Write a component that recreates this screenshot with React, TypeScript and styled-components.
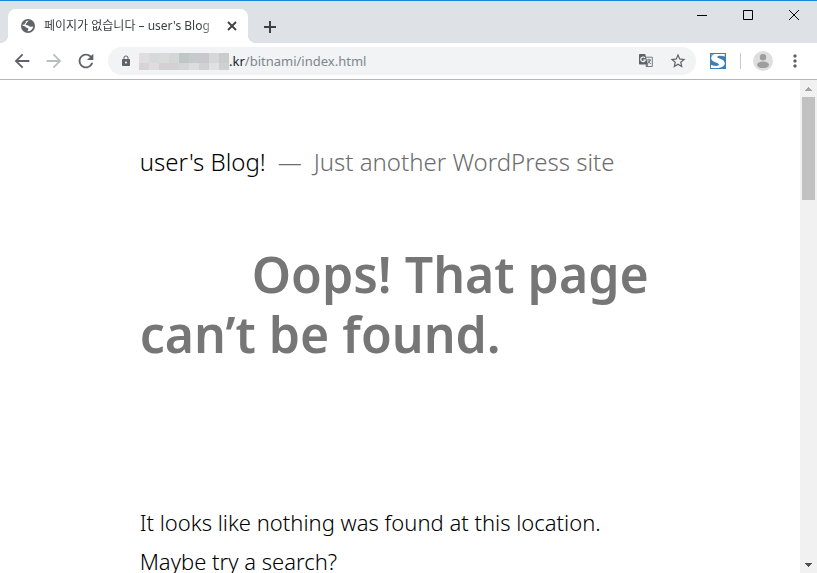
import React, { useState } from "react";
import styled, { createGlobalStyle } from "styled-components";
import { MdArrowBack, MdArrowForward, MdRefresh, MdLock, MdStarBorder, MdMoreVert } from "react-icons/md";

const ui = `"Noto Sans", "Noto Sans CJK KR", sans-serif`;

const GlobalStyle = createGlobalStyle`
  * { box-sizing: border-box; }
  body { margin: 0; background: #fff; }
  button { border: 0; padding: 0; background: none; color: inherit; font: inherit; display: flex; align-items: center; justify-content: center; }
  svg { display: block; flex: none; }
`;

const Window = styled.div`
  display: flex;
  flex-direction: column;
  height: 100vh;
  overflow: hidden;
  font-family: ${ui};
`;

const TabStrip = styled.header`
  display: flex;
  align-items: flex-end;
  flex: none;
  height: 43px;
  padding-left: 8px;
  border-top: 1px solid #1883d7;
  background: #dee1e6;
`;

const Tab = styled.div`
  position: relative;
  display: flex;
  align-items: center;
  width: 240px;
  height: 34px;
  padding: 0 8px 0 12px;
  border-radius: 8px 8px 0 0;
  background: #fff;
  color: #5f6368;

  &::before, &::after {
    content: "";
    position: absolute;
    bottom: 0;
    width: 8px;
    height: 8px;
  }
  &::before { left: -8px; background: radial-gradient(circle at 0 0, transparent 8px, #fff 8px); }
  &::after { right: -8px; background: radial-gradient(circle at 100% 0, transparent 8px, #fff 8px); }
`;

const TabTitle = styled.button`
  && {
    flex: 1;
    min-width: 0;
    margin-left: 8px;
    justify-content: flex-start;
    overflow: hidden;
    white-space: nowrap;
    font-size: 12px;
    line-height: 18px;
    color: #3c4043;
    mask-image: linear-gradient(to right, #000 156px, transparent 178px);
  }
`;

const IconButton = styled.button<{ $size?: number; $color?: string }>`
  && {
    flex: none;
    width: ${(p) => p.$size ?? 32}px;
    height: ${(p) => p.$size ?? 32}px;
    color: ${(p) => p.$color ?? "#5f6368"};
  }
`;

const NewTab = styled(IconButton)`
  && { margin-left: 6px; }
`;

const WindowControls = styled.div`
  display: flex;
  align-self: flex-start;
  margin-left: auto;
`;

const ControlButton = styled.button`
  && {
    width: 46px;
    height: 28px;
    color: #000;
  }
`;

const Toolbar = styled.nav`
  display: flex;
  align-items: center;
  flex: none;
  height: 37px;
  padding: 0 6px;
  border-bottom: 1px solid #b6b6b6;
  background: #fff;
`;

const AddressBar = styled.form`
  display: flex;
  align-items: center;
  flex: 1;
  min-width: 0;
  height: 28px;
  margin: 0 6px;
  padding: 0 2px 0 12px;
  border-radius: 14px;
  background: #f1f3f4;
  color: #5f6368;
  font-size: 13px;
  line-height: 20px;
`;

const Mosaic = styled.div`
  display: grid;
  grid-template-columns: repeat(9, 10px);
  grid-template-rows: 10px 7px;
  margin-left: 7px;
`;

const Tile = styled.span<{ $color: string }>`
  background: ${(p) => p.$color};
`;

const Domain = styled.label`
  color: #202124;
`;

const PathInput = styled.input`
  flex: 1;
  min-width: 0;
  padding: 0;
  border: 0;
  outline: 0;
  background: none;
  color: #80868b;
  font: inherit;
`;

const Divider = styled.span`
  width: 1px;
  height: 16px;
  margin: 0 6px;
  background: #c6c8cb;
`;

const Body = styled.div`
  display: flex;
  flex: 1;
  min-height: 0;
`;

const Page = styled.main`
  flex: 1;
  min-width: 0;
  overflow: hidden;
  padding: 64px calc(10% + 58px) 0;
  color: #000;
`;

const SiteBranding = styled.div`
  display: flex;
  flex-wrap: wrap;
  font-size: 24px;
  line-height: 36px;
  font-weight: 350;
  color: #6c6c6c;
`;

const SiteTitle = styled.a`
  color: #000;
  text-decoration: none;
`;

const Dash = styled.span`
  margin: 0 12px;
`;

const PageTitle = styled.h1`
  margin: 64px 0 0;
  font-size: 50px;
  line-height: 60px;
  font-weight: 600;
  text-indent: 112px;
  color: #767676;
`;

const Message = styled.p`
  margin: 139px 0 0;
  font-size: 22px;
  line-height: 39px;
  font-weight: 350;
`;

const Scrollbar = styled.div`
  display: flex;
  flex-direction: column;
  flex: none;
  width: 17px;
  background: #f1f1f1;
`;

const Track = styled.div`
  flex: 1;
  padding: 0 2px;
`;

const Thumb = styled.div`
  height: 22.5%;
  background: #c1c1c1;
`;

const tiles = [
  "#e0dcdf", "#d7dadb", "#d9dbdb", "#d5d7d7", "#bfc6c5", "#c7caca", "#c9c8cc", "#d4d8d6", "#c9cbcd",
  "#d7d3d6", "#dcdddf", "#d2d1d4", "#d2d1d4", "#d5d5d7", "#dadfdd", "#d2d2d4", "#dfe2e1", "#cdd1d3",
];

const Globe = () => (
  <svg width="16" height="16" viewBox="0 0 16 16">
    <circle cx="8" cy="8" r="7" fill="#5f6368" />
    <path d="M9.4 2.8C8 3 7.3 3.8 7 4.6 6.8 5.8 5.4 5.4 5.6 6.6 5.8 7.6 8.2 7 9 8 9.6 9 10.6 8.8 13.2 8.4 12.8 11.6 10.4 13.4 7.6 13.3 7.4 12.4 8.8 11.8 8.2 10.6 7.6 9.6 6.2 10 5.6 9 5 8.2 4 8 2.6 7.8 2.8 5 5.6 2.3 9.4 2.8Z" fill="#fff" />
    <path d="M3.4 4.4 5.2 3.2 6.2 4.3 4.8 5.4 4.2 6.8 2.8 6.6Z" fill="#5f6368" />
  </svg>
);

const CloseMark = () => (
  <svg width="14" height="14" viewBox="0 0 14 14">
    <path d="M3 3 11 11M11 3 3 11" stroke="currentColor" strokeWidth="1.8" />
  </svg>
);

const Plus = () => (
  <svg width="14" height="14" viewBox="0 0 14 14">
    <path d="M7 1V13M1 7H13" stroke="currentColor" strokeWidth="2" />
  </svg>
);

const Translate = () => (
  <svg width="16" height="16" viewBox="0 0 16 16">
    <path d="M7 4.2h7.3v9.3H8.2" fill="none" stroke="#777b80" />
    <path d="M1.8 1h5.4L10 11.6H2.2Q1 11.6 1 10.4V1.8Q1 1 1.8 1Z" fill="#5f6368" />
    <path d="M7 5A2.3 2.3 0 1 0 7.3 7H5.2" fill="none" stroke="#fff" strokeWidth="1.1" />
    <path d="M9 7h4M11 5.8V7M12.3 7Q11.5 9.5 9.5 10.5M10 8.2 12.7 11M8 11.8l1.8 0-1.4 2z" fill="none" stroke="#5f6368" strokeWidth=".9" />
  </svg>
);

const Extension = () => (
  <svg width="16" height="16" viewBox="0 0 16 16">
    <rect width="16" height="16" fill="#3c7fb6" />
    <path d="M1 1H14.8V3.4C11 2.2 7.4 2.4 7.2 4 7 5.6 14.6 6 14.8 10 14.9 13.3 11 15 7 15H1V11.7C4.5 13.3 8.8 13.3 9 11.5 9.2 9.5 1.3 9.5 1.2 5.2 1.2 3.2 2.2 1.8 4 1Z" fill="#fff" />
    <path d="M1 1H4.2C2.6 1.7 1.4 3 1 4.5Z" fill="#65a5d2" />
  </svg>
);

const Avatar = () => (
  <svg width="20" height="20" viewBox="0 0 20 20">
    <circle cx="10" cy="10" r="10" fill="#dedede" />
    <circle cx="10" cy="6.2" r="3.2" fill="#9e9e9e" />
    <ellipse cx="10" cy="13.8" rx="6" ry="3.3" fill="#9e9e9e" />
  </svg>
);

const Arrow = ({ down }: { down?: boolean }) => (
  <svg width="7" height="4" viewBox="0 0 7 4" shapeRendering="crispEdges">
    <path d={down ? "M0 0H7V1H6V2H5V3H4V4H3V3H2V2H1V1H0Z" : "M3 0H4V1H5V2H6V3H7V4H0V3H1V2H2V1H3Z"} fill={down ? "#505050" : "#a3a3a3"} />
  </svg>
);

export default function App() {
  const [path, setPath] = useState("/bitnami/index.html");
  return (
    <Window>
      <GlobalStyle />
      <TabStrip>
        <Tab>
          <Globe />
          <TabTitle>페이지가 없습니다 – user's Blog</TabTitle>
          <IconButton $size={16} $color="#3c4043" aria-label="Close tab"><CloseMark /></IconButton>
        </Tab>
        <NewTab $color="#3c4043" aria-label="New tab"><Plus /></NewTab>
        <WindowControls>
          <ControlButton aria-label="Minimize">
            <svg width="10" height="10"><path d="M0 5.5H10" stroke="#000" /></svg>
          </ControlButton>
          <ControlButton aria-label="Maximize">
            <svg width="10" height="10"><path d="M.5 .5H9.5V9.5H.5Z" fill="none" stroke="#000" /></svg>
          </ControlButton>
          <ControlButton aria-label="Close">
            <svg width="10" height="10"><path d="M0 0 10 10M10 0 0 10" stroke="#000" /></svg>
          </ControlButton>
        </WindowControls>
      </TabStrip>
      <Toolbar>
        <IconButton aria-label="Back"><MdArrowBack size={22} /></IconButton>
        <IconButton $color="#bbbdbf" aria-label="Forward"><MdArrowForward size={22} /></IconButton>
        <IconButton aria-label="Reload"><MdRefresh size={22} /></IconButton>
        <AddressBar onSubmit={(e) => e.preventDefault()}>
          <MdLock size={12} />
          <Mosaic>{tiles.map((c, i) => <Tile key={i} $color={c} />)}</Mosaic>
          <Domain htmlFor="path">.kr</Domain>
          <PathInput id="path" value={path} onChange={(e) => setPath(e.target.value)} />
          <IconButton type="button" aria-label="Translate"><Translate /></IconButton>
          <IconButton type="button" aria-label="Bookmark"><MdStarBorder size={18} /></IconButton>
        </AddressBar>
        <IconButton aria-label="Extension"><Extension /></IconButton>
        <Divider />
        <IconButton aria-label="Profile"><Avatar /></IconButton>
        <IconButton aria-label="Menu"><MdMoreVert size={20} /></IconButton>
      </Toolbar>
      <Body>
        <Page>
          <SiteBranding>
            <SiteTitle href="#">user's Blog!</SiteTitle>
            <Dash>—</Dash>
            <span>Just another WordPress site</span>
          </SiteBranding>
          <PageTitle>Oops! That page can’t be found.</PageTitle>
          <Message>It looks like nothing was found at this location. Maybe try a search?</Message>
        </Page>
        <Scrollbar>
          <IconButton $size={17} aria-label="Scroll up"><Arrow /></IconButton>
          <Track><Thumb /></Track>
          <IconButton $size={17} aria-label="Scroll down"><Arrow down /></IconButton>
        </Scrollbar>
      </Body>
    </Window>
  );
}
